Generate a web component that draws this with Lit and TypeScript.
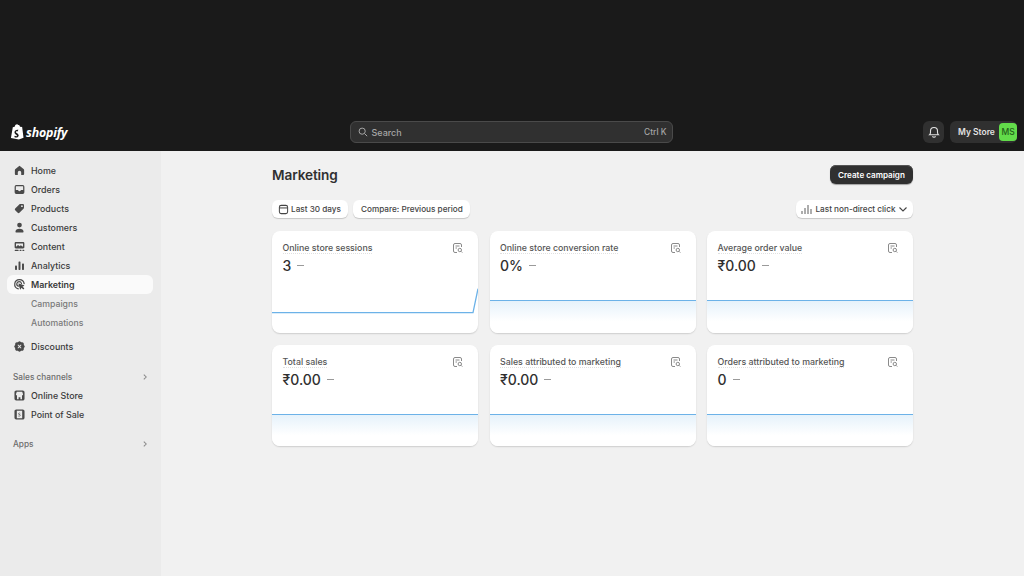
import { LitElement, css, html, svg } from "lit";
import { customElement } from "lit/decorators.js";

const icons: Record<string, unknown> = {
  home: svg`<path d="M8 2.200 3 6.200c-.5.4-.7.8-.7 1.400V12c0 .9.6 1.500 1.500 1.500h2.100v-3a2.100 2.100 0 0 1 4.200 0v3h2.100c.9 0 1.500-.6 1.500-1.500V7.600c0-.6-.2-1-.7-1.400z"/>`,
  orders: svg`<path fill-rule="evenodd" d="M4 2.500h8A2 2 0 0 1 14 4.500v7a2 2 0 0 1-2 2H4a2 2 0 0 1-2-2v-7a2 2 0 0 1 2-2zm-.5 2v4.200h2.200c.4 0 .6.2.8.5.3.6 1 1 1.500 1s1.200-.4 1.500-1c.2-.3.4-.5.8-.5h2.200V4.500c0-.3-.2-.5-.5-.5H4c-.3 0-.5.2-.5.5z"/>`,
  products: svg`<path fill-rule="evenodd" d="M9 2.500h3.200c.7 0 1.300.6 1.300 1.300V7c0 .5-.2 1-.6 1.300l-5 5c-.6.6-1.500.6-2.100 0L2.700 10.200c-.6-.6-.6-1.500 0-2.100l5-5c.3-.4.800-.6 1.300-.6zm2 3.700a1.100 1.100 0 1 0 0-2.200 1.100 1.100 0 0 0 0 2.200z"/>`,
  customers: svg`<circle cx="8" cy="5" r="2.900"/><path d="M3 13.300c0-2.500 2-3.900 5-3.900s5 1.400 5 3.900c0 .4-.3.700-.7.700H3.700c-.4 0-.7-.3-.7-.7z"/>`,
  content: svg`<path fill-rule="evenodd" d="M3.500 2.500h9c.8 0 1.500.7 1.500 1.500v5c0 .8-.7 1.500-1.500 1.500h-9C2.700 10.500 2 9.800 2 9V4c0-.8.7-1.500 1.500-1.500zm.2 5.800 2.500-2.200 2 1.700 1.400-1.200 2.700 1.700V4.200H3.700z"/><rect x="2" y="12" width="5" height="1.600" rx=".6"/><rect x="8" y="12" width="2.500" height="1.600" rx=".6"/><rect x="11.500" y="12" width="2.500" height="1.600" rx=".6"/>`,
  analytics: svg`<rect x="2.500" y="8" width="2.400" height="5.500" rx=".8"/><rect x="6.800" y="3" width="2.400" height="10.500" rx=".8"/><rect x="11.100" y="5.500" width="2.400" height="8" rx=".8"/>`,
  marketing: svg`<path fill="none" stroke="currentColor" stroke-width="1.500" stroke-linecap="round" d="M6.500 13.300A5.800 5.800 0 1 1 13.700 7"/><path fill="none" stroke="currentColor" stroke-width="1.500" stroke-linecap="round" d="M6.900 10.100a2.900 2.900 0 1 1 3.500-3.300"/><path d="M7.200 6.800c-.3-.2-.6 0-.5.400l1.900 6.500c.1.400.6.400.8.100l1-1.900 2 2c.2.200.5.200.7 0l.6-.6c.2-.2.2-.5 0-.7l-2-2 1.900-.9c.3-.2.300-.7-.1-.8z"/>`,
  discounts: svg`<path fill-rule="evenodd" d="M8 1.500c.6 0 1.100.5 1.600 1 .4.300 1.100.2 1.800.2.900 0 1.900.9 1.900 1.900 0 .7-.1 1.400.2 1.800.5.500 1 1 1 1.600s-.5 1.100-1 1.600c-.3.400-.2 1.100-.2 1.800 0 1-1 1.900-1.900 1.900-.7 0-1.400-.1-1.800.2-.5.500-1 1-1.600 1s-1.100-.5-1.600-1c-.4-.3-1.100-.2-1.800-.2-.9 0-1.900-.9-1.900-1.900 0-.7.1-1.400-.2-1.800-.5-.5-1-1-1-1.600s.5-1.100 1-1.600c.3-.4.2-1.100.2-1.800 0-1 1-1.900 1.900-1.900.7 0 1.400.1 1.800-.2.500-.5 1-1 1.600-1zM6.300 5.500l-.8.800L7.200 8 5.500 9.700l.8.800L8 8.800l1.700 1.700.8-.8L8.800 8l1.700-1.700-.8-.8L8 7.200z"/>`,
  store: svg`<path fill-rule="evenodd" d="M4 1.800h8c1.200 0 2.200 1 2.200 2.200v8c0 1.200-1 2.200-2.200 2.200H4A2.200 2.200 0 0 1 1.800 12V4C1.800 2.800 2.800 1.800 4 1.800zm.7 1.700-1.100 3c0 .8.600 1.400 1.300 1.400v4.600h2V10h2.200v2.500h2V7.900c.7 0 1.300-.6 1.300-1.400l-1.100-3z"/>`,
  pos: svg`<path fill-rule="evenodd" d="M4 1.800h8c1.200 0 2.200 1 2.200 2.200v8c0 1.200-1 2.200-2.200 2.200H4A2.200 2.200 0 0 1 1.800 12V4C1.800 2.800 2.800 1.800 4 1.800zm.7 1.600v9.200h6.600V3.400zm4.300 2.700c-.9-.5-2.400-.2-2.400 1 0 1.400 2 1.200 2 2 0 .6-1.100.5-1.800.2l-.2.800c1 .5 2.700.2 2.700-1.100 0-1.500-2-1.300-2-2 0-.5.8-.5 1.500-.2z"/>`,
};

const nav = [
  ["home", "Home"],
  ["orders", "Orders"],
  ["products", "Products"],
  ["customers", "Customers"],
  ["content", "Content"],
  ["analytics", "Analytics"],
  ["marketing", "Marketing"],
];

const cards = [
  ["Online store sessions", "3"],
  ["Online store conversion rate", "0%"],
  ["Average order value", "₹0.00"],
  ["Total sales", "₹0.00"],
  ["Sales attributed to marketing", "₹0.00"],
  ["Orders attributed to marketing", "0"],
];

@customElement("app-root")
export class AppRoot extends LitElement {
  // Templates ---------------------------------------------------------------

  navItem(icon: string, label: string) {
    return html`<div class="nav-item ${label === "Marketing" ? "active" : ""}">
      <svg class="nav-icon" viewBox="0 0 16 16" fill="currentColor">${icons[icon]}</svg>
      <span>${label}</span>
    </div>`;
  }

  section(label: string) {
    return html`<div class="section">
      <span>${label}</span>
      <svg width="8" height="8" viewBox="0 0 10 10" fill="none" stroke="#8a8a8a" stroke-width="1.300">
        <path d="m3.500 2 3 3-3 3" />
      </svg>
    </div>`;
  }

  card(title: string, value: string, index: number) {
    const line =
      index === 0
        ? html`<svg class="chart" viewBox="0 0 206 102" preserveAspectRatio="none">
            <path d="M0 82H201L206 58" fill="none" stroke="#6cb2e8" stroke-width="1.300" />
          </svg>`
        : html`<div class="flat"></div>`;
    return html`<div class="card">
      <div class="card-head">
        <span class="card-title">${title}</span>
        <svg class="report" viewBox="0 0 12 12" fill="none" stroke="currentColor" stroke-width="1">
          <path d="M5 10.500H3A1.500 1.500 0 0 1 1.500 9V3A1.500 1.500 0 0 1 3 1.500h5A1.500 1.500 0 0 1 9.500 3v2" />
          <path d="M3.500 4h4M3.500 6h1.500" />
          <circle cx="7.800" cy="8" r="1.700" />
          <path d="m9 9.300 1.300 1.300" />
        </svg>
      </div>
      <div class="value">${value}<i class="dash"></i></div>
      ${line}
    </div>`;
  }

  render() {
    return html`<div class="topbar">
        <div class="logo">
          <svg width="14" height="16" viewBox="0 0 15 17">
            <path fill="#fff" d="M1 14.800 3 3.500 5 2.800C5.500 1.200 6.500.300 7.500.300c.6 0 1 .3 1.300.8l1-.2 1 2 2.200.3 1.500 11.400L9.500 16.500z" />
            <path fill="#1a1a1a" d="M8.800 6.300 8.200 8C7.500 7.700 6.300 7.600 6.300 8.400c0 1 3 1.500 3 3.800 0 2-2.800 3-4.700 1.700l.5-1.500c.8.500 2.200.9 2.300 0 .1-1-2.600-1.400-2.600-3.700 0-2.400 2.800-3.300 4.500-2.400z" />
          </svg>
          <span>shopify</span>
        </div>
        <div class="search">
          <svg width="10" height="10" viewBox="0 0 12 12" fill="none" stroke="currentColor" stroke-width="1.200">
            <circle cx="5" cy="5" r="3.700" /><path d="m8 8 3 3" />
          </svg>
          <span>Search</span>
          <span class="kbd">Ctrl K</span>
        </div>
        <div class="top-right">
          <div class="bell">
            <svg width="12" height="12" viewBox="0 0 12 12" fill="none" stroke="#e3e3e3" stroke-width="1.100">
              <path d="M1.500 8.800c.7-.7 1-1.300 1-2.300V5a3.500 3.500 0 0 1 7 0v1.500c0 1 .3 1.600 1 2.300z" />
              <path d="M4.500 10.200a1.600 1.600 0 0 0 3 0" />
            </svg>
          </div>
          <div class="store">
            <span>My Store</span>
            <span class="avatar">MS</span>
          </div>
        </div>
      </div>
      <div class="body">
        <aside class="sidebar">
          ${nav.map(([i, l]) => this.navItem(i, l))}
          <div class="sub">Campaigns</div>
          <div class="sub">Automations</div>
          <div class="gap-discounts">${this.navItem("discounts", "Discounts")}</div>
          ${this.section("Sales channels")}
          ${this.navItem("store", "Online Store")}
          ${this.navItem("pos", "Point of Sale")}
          ${this.section("Apps")}
        </aside>
        <main class="main">
          <div class="title-row">
            <h1>Marketing</h1>
            <button class="primary">Create campaign</button>
          </div>
          <div class="filters">
            <div class="pill">
              <svg width="11" height="11" viewBox="0 0 12 12" fill="none" stroke="currentColor" stroke-width="1.100">
                <rect x="1.500" y="1.500" width="9" height="9" rx="2" /><path d="M1.500 4.300h9" />
              </svg>
              Last 30 days
            </div>
            <div class="pill compare">Compare: Previous period</div>
            <div class="pill right">
              <svg width="12" height="11" viewBox="0 0 12 11" stroke="#5c5c5c" stroke-width="1">
                <path d="M1 10V7M4 10V4M7 10V1M10 10V5" />
              </svg>
              Last non-direct click
              <svg class="chev" width="10" height="10" viewBox="0 0 10 10" fill="none" stroke="currentColor" stroke-width="1.100">
                <path d="m1.500 3.500 3.500 3.500 3.500-3.500" />
              </svg>
            </div>
          </div>
          <div class="grid">${cards.map(([t, v], i) => this.card(t, v, i))}</div>
        </main>
      </div>`;
  }

  static styles = css`
    :host {
      display: flex;
      flex-direction: column;
      width: 1024px;
      height: 576px;
      overflow: hidden;
      font-family: Inter, "Liberation Sans", sans-serif;
      color: #303030;
    }

    .topbar {
      flex: none;
      height: 151px;
      box-sizing: border-box;
      padding: 113px 7px 0 10px;
      background: #1a1a1a;
      display: grid;
      grid-template-columns: 1fr 324px 1fr;
      align-items: center;
    }

    .logo {
      display: flex;
      align-items: center;
      gap: 2px;
      height: 38px;
    }

    .logo span {
      font: italic 700 12.400px "Open Sans", sans-serif;
      color: #fff;
      letter-spacing: -0.200px;
    }

    .search {
      margin: 0 3px 0 -2px;
      height: 22px;
      box-sizing: border-box;
      border: 1px solid #4a4a4a;
      border-radius: 6px;
      background: #303030;
      color: #a6a6a6;
      display: flex;
      align-items: center;
      gap: 4px;
      padding: 0 5px 0 7px;
      font-size: 9px;
      font-weight: 500;
    }

    .kbd {
      margin-left: auto;
      font-size: 8.400px;
    }

    .top-right {
      display: flex;
      justify-content: flex-end;
      align-items: center;
      gap: 6px;
    }

    .bell {
      width: 21px;
      height: 22px;
      border-radius: 6px;
      background: #303030;
      display: flex;
      align-items: center;
      justify-content: center;
    }

    .store {
      height: 22px;
      width: 67px;
      box-sizing: border-box;
      border-radius: 6px;
      background: #303030;
      color: #e3e3e3;
      font-size: 8.500px;
      font-weight: 600;
      white-space: nowrap;
      display: flex;
      align-items: center;
      justify-content: space-between;
      padding: 0 0 0 8px;
    }

    .avatar {
      width: 18px;
      height: 18px;
      border-radius: 4px;
      background: #62dc4a;
      color: #24601a;
      font-size: 8.500px;
      font-weight: 500;
      display: flex;
      align-items: center;
      justify-content: center;
    }

    .body {
      flex: 1;
      display: flex;
      min-height: 0;
    }

    .sidebar {
      flex: none;
      width: 161px;
      box-sizing: border-box;
      padding: 10px 8px 0 7px;
      background: #ebebeb;
      display: flex;
      flex-direction: column;
    }

    .nav-item {
      height: 19px;
      display: flex;
      align-items: center;
      gap: 5px;
      padding-left: 6px;
      border-radius: 6px;
      font-size: 8.900px;
      font-weight: 500;
      color: #3a3a3a;
      white-space: nowrap;
    }

    .nav-item.active {
      background: #fafafa;
      font-weight: 600;
    }

    .nav-icon {
      width: 13px;
      height: 13px;
      flex: none;
      color: #4a4a4a;
    }

    .sub {
      height: 19px;
      display: flex;
      align-items: center;
      padding-left: 24px;
      font-size: 8.700px;
      font-weight: 500;
      color: #7a7a7a;
    }

    .gap-discounts {
      margin-top: 5px;
    }

    .section {
      height: 19px;
      margin-top: 11px;
      display: flex;
      align-items: center;
      justify-content: space-between;
      padding: 0 4px 0 6px;
      font-size: 8.250px;
      font-weight: 500;
      color: #6b6b6b;
    }

    .nav-item + .section:last-child {
      margin-top: 10px;
    }

    .main {
      flex: 1;
      background: #f1f1f1;
      padding: 14px 111px 0 111px;
      min-width: 0;
    }

    .title-row {
      display: flex;
      align-items: center;
      justify-content: space-between;
      height: 19px;
    }

    h1 {
      margin: 0;
      font-size: 13.600px;
      font-weight: 600;
      color: #303030;
      letter-spacing: -0.100px;
    }

    .primary {
      width: 83px;
      height: 19px;
      padding: 0;
      border: 0;
      border-radius: 6px;
      background: #303030;
      box-shadow: inset 0 1px 0 #555, 0 1px 1px #0005;
      color: #fff;
      font: 600 8.100px Inter, sans-serif;
    }

    .filters {
      margin-top: 16px;
      display: flex;
      gap: 5px;
    }

    .pill {
      height: 18px;
      box-sizing: border-box;
      padding: 0 7px 0 6px;
      border-radius: 6px;
      background: #fff;
      box-shadow: 0 1px 1px #0000002e;
      display: flex;
      align-items: center;
      gap: 2px;
      font-size: 8.200px;
      font-weight: 500;
      color: #444;
      white-space: nowrap;
    }

    .compare {
      padding: 0 7px 0 8px;
    }

    .right {
      margin-left: auto;
      padding: 0 5px;
      gap: 2.500px;
    }

    .grid {
      margin-top: 13px;
      display: grid;
      grid-template-columns: repeat(3, 206px);
      justify-content: space-between;
      grid-auto-rows: 101.500px;
      row-gap: 12px;
    }

    .card {
      position: relative;
      overflow: hidden;
      border-radius: 8px;
      background: #fff;
      box-shadow: 0 1px 1.500px #00000026;
      padding: 11px 14px 0 10.500px;
    }

    .card-head {
      display: flex;
      align-items: center;
      justify-content: space-between;
      height: 12px;
    }

    .card-title {
      font-size: 8.800px;
      font-weight: 500;
      color: #555;
      border-bottom: 1px dotted #e0e0e0;
      white-space: nowrap;
    }

    .report {
      width: 12px;
      height: 12px;
      color: #8a8a8a;
      flex: none;
    }

    .value {
      margin-top: 3px;
      display: flex;
      align-items: center;
      font-size: 14px;
      font-weight: 500;
      color: #303030;
      line-height: 17px;
    }

    .dash {
      width: 7px;
      height: 1px;
      margin-left: 6px;
      background: #9a9a9a;
    }

    .chart {
      position: absolute;
      inset: 0;
      width: 100%;
      height: 100%;
    }

    .flat {
      position: absolute;
      left: 0;
      right: 0;
      top: 69px;
      height: 33px;
      border-top: 1px solid #6cb2e8;
      background: linear-gradient(#e6f2fb, #ffffff 62%);
    }
  `;
}

declare global {
  interface HTMLElementTagNameMap {
    "app-root": AppRoot;
  }
}
